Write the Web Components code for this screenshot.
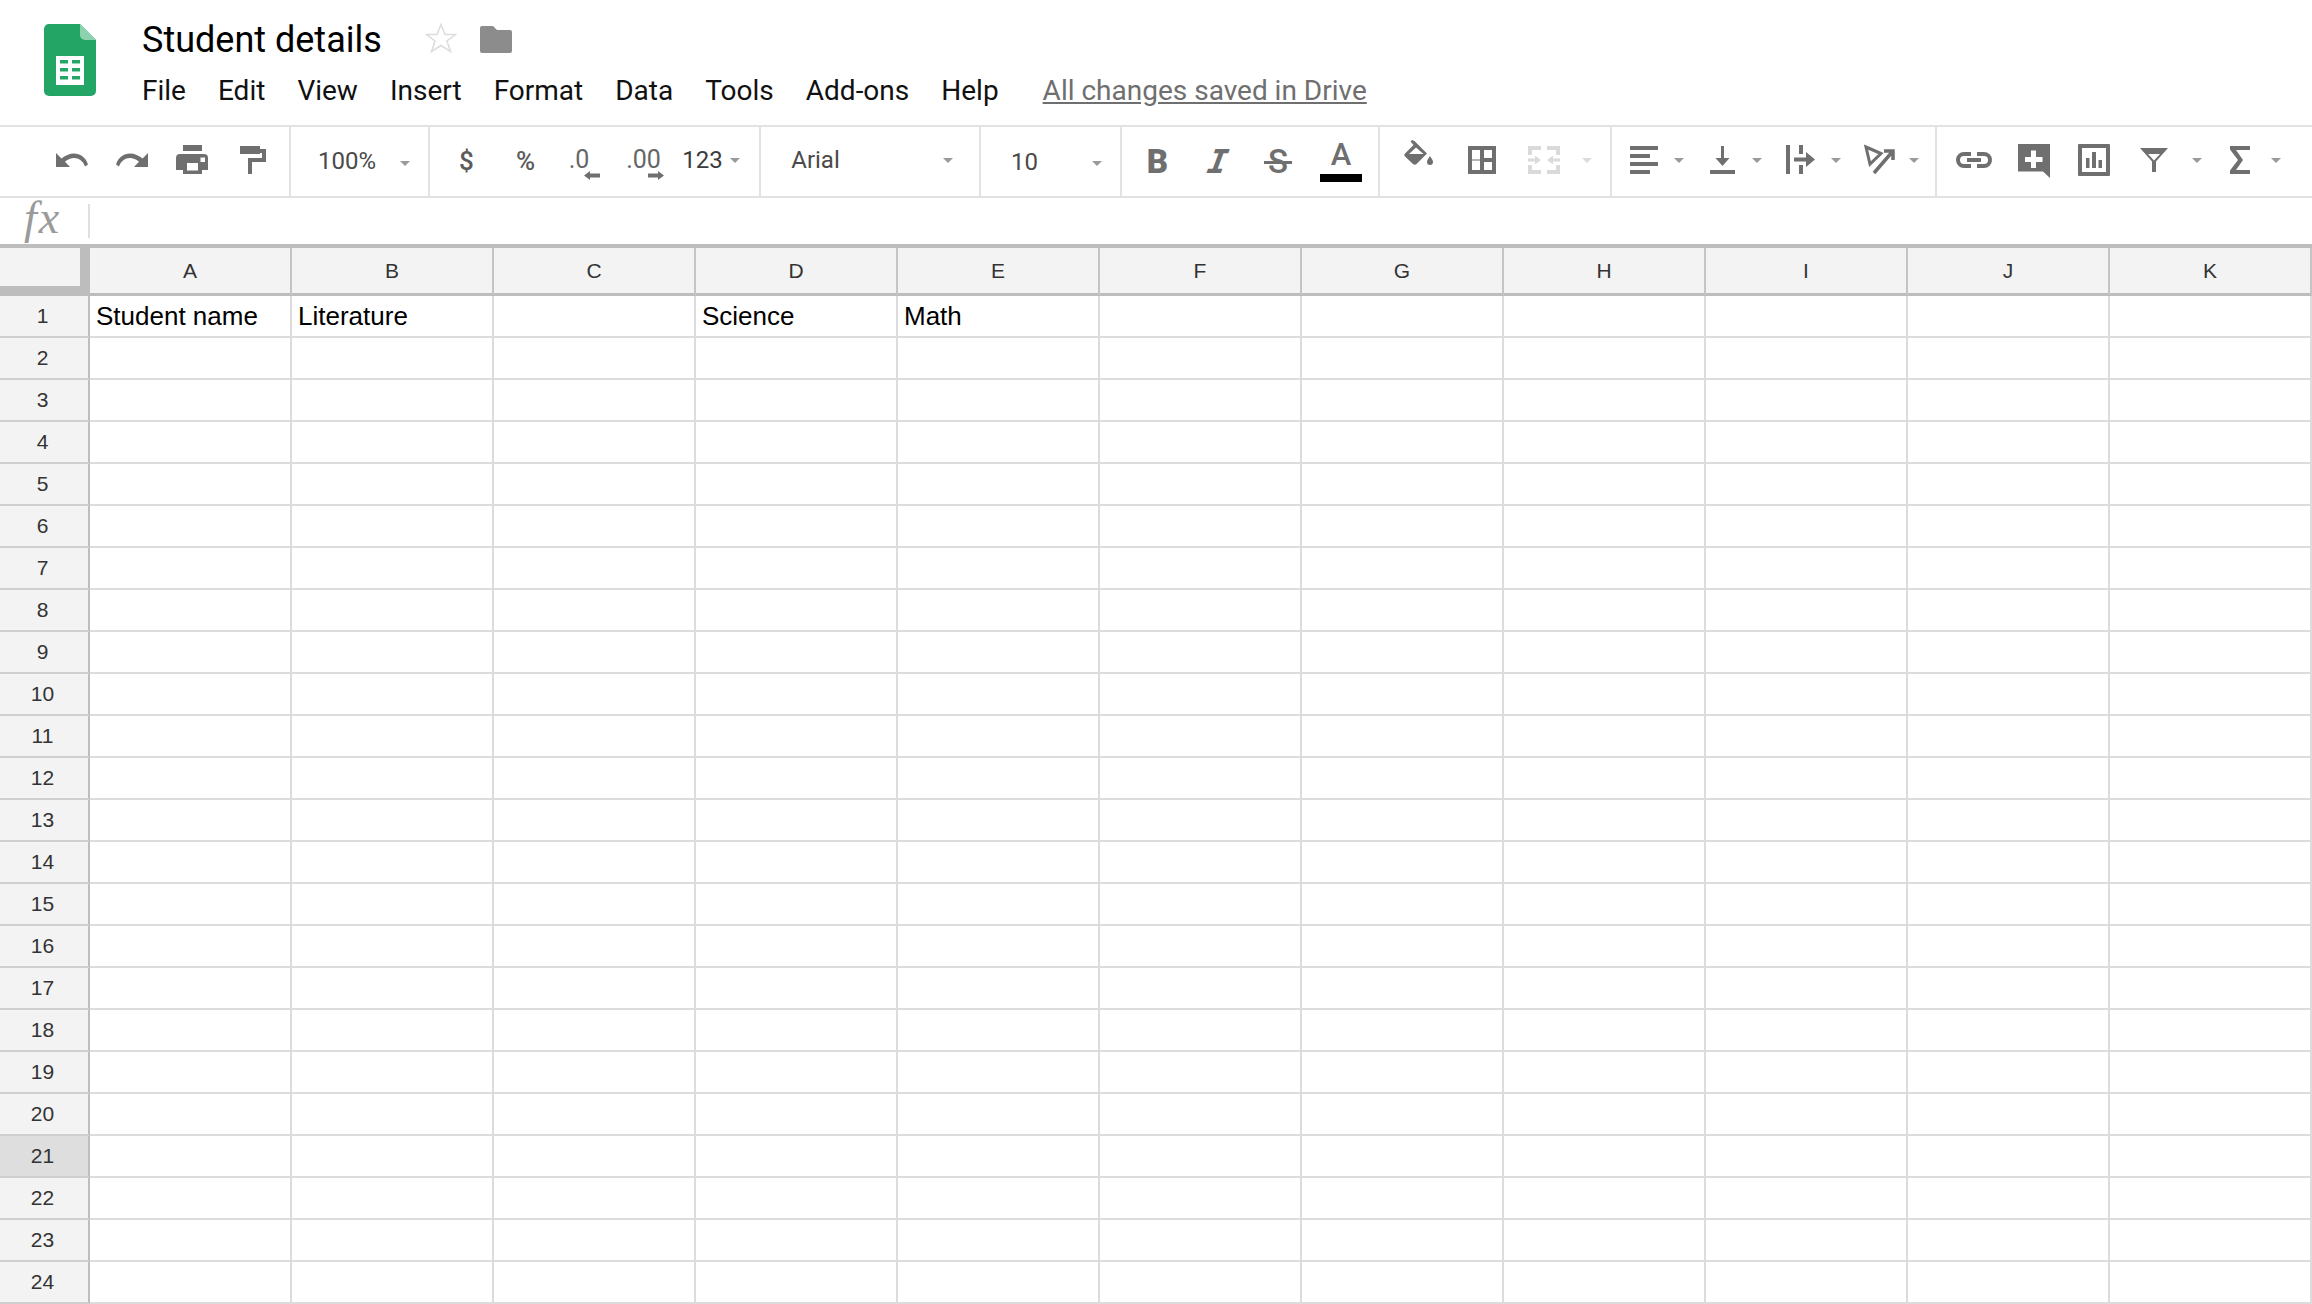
<!DOCTYPE html>
<html lang="en">
<head>
<meta charset="utf-8">
<title>Student details</title>
<style>
html,body{margin:0;padding:0;background:#fff;height:1304px;overflow:hidden;font-family:Roboto,"Liberation Sans",sans-serif}
svg{display:block;flex:none;overflow:visible}
.g{fill:#6f6f6f}
.s{fill:none;stroke:#6f6f6f;stroke-width:4}
</style>
</head>
<body>
<gs-app>
  <gs-header doc-title="Student details">
    <gs-menu-item slot="menu">File</gs-menu-item>
    <gs-menu-item slot="menu">Edit</gs-menu-item>
    <gs-menu-item slot="menu">View</gs-menu-item>
    <gs-menu-item slot="menu">Insert</gs-menu-item>
    <gs-menu-item slot="menu">Format</gs-menu-item>
    <gs-menu-item slot="menu">Data</gs-menu-item>
    <gs-menu-item slot="menu">Tools</gs-menu-item>
    <gs-menu-item slot="menu">Add-ons</gs-menu-item>
    <gs-menu-item slot="menu">Help</gs-menu-item>
  </gs-header>

  <gs-toolbar>
    <tb-group w="291">
      <tb-btn ml="56" w="32" t="25"><svg width="32" height="16" viewBox="0 0 32 16"><path class="g" d="M0 1V15H14L9 9.7C12 7.3 15 6 18 6C23 6 27 9 29 14.5L32 12.5C29.5 5 24 1.5 18 1.5C13.5 1.5 9 3.5 5.5 6.5Z"/></svg></tb-btn>
      <tb-btn ml="28" w="32" t="25"><svg width="32" height="16" viewBox="0 0 32 16"><path class="g" transform="matrix(-1 0 0 1 32 0)" d="M0 1V15H14L9 9.7C12 7.3 15 6 18 6C23 6 27 9 29 14.5L32 12.5C29.5 5 24 1.5 18 1.5C13.5 1.5 9 3.5 5.5 6.5Z"/></svg></tb-btn>
      <tb-btn ml="28" w="32" t="18"><svg width="32" height="29" viewBox="0 0 32 29"><path class="g" d="M7 0H26V6H7ZM4 9H28A4 4 0 0 1 32 13V25H26V29H7V25H0V13A4 4 0 0 1 4 9Z"/><path fill="#fff" d="M11 18H22V25.500H11ZM24.500 12.500H29V17H24.500Z"/></svg></tb-btn>
      <tb-btn ml="32" w="26" t="18"><svg width="26" height="29" viewBox="0 0 26 29"><path class="g" d="M0 1H20V9H0ZM20 4H26V17H12V29H8V13H22V8H20Z"/></svg></tb-btn>
    </tb-group>
    <tb-group w="139">
      <tb-btn ml="27" w="58" t="19"><span class="t" style="font-size:24px;color:#4a4a4a">100%</span></tb-btn>
      <tb-btn ml="24" w="10" t="34" arrow></tb-btn>
    </tb-group>
    <tb-group w="331">
      <tb-btn ml="30" w="13" t="19"><span class="t" style="font-size:26px;font-weight:500;color:#5c5c5c">$</span></tb-btn>
      <tb-btn ml="43" w="19" t="19"><span class="t" style="font-size:26px;font-weight:500;color:#5c5c5c">%</span></tb-btn>
      <tb-btn ml="34" w="20" t="18"><span class="t" style="font-size:25px;color:#666">.0</span><svg style="position:absolute;left:15px;top:44px" width="16" height="9" viewBox="0 0 16 9"><path class="g" d="M0 4.500L6 0V2.500H16V6.500H6V9Z"/></svg></tb-btn>
      <tb-btn ml="39" w="31" t="18"><span class="t" style="font-size:25px;color:#666">.00</span><svg style="position:absolute;left:20px;top:44px" width="16" height="9" viewBox="0 0 16 9"><path class="g" d="M16 4.500L10 0V2.500H0V6.500H10V9Z"/></svg></tb-btn>
      <tb-btn ml="24" w="39" t="18"><span class="t" style="font-size:24px;color:#3c3c3c">123</span></tb-btn>
      <tb-btn ml="8" w="10" t="31" arrow></tb-btn>
    </tb-group>
    <tb-group w="220">
      <tb-btn ml="30" w="49" t="18"><span class="t" style="font-size:24px;color:#4a4a4a">Arial</span></tb-btn>
      <tb-btn ml="103" w="10" t="31" arrow></tb-btn>
    </tb-group>
    <tb-group w="141">
      <tb-btn ml="30" w="27" t="20"><span class="t" style="font-size:24px;color:#4a4a4a">10</span></tb-btn>
      <tb-btn ml="54" w="10" t="34" arrow></tb-btn>
    </tb-group>
    <tb-group w="258">
      <tb-btn ml="26" w="19" t="16"><span class="t" style="font:900 33px/38px Roboto,sans-serif;color:#6f6f6f">B</span></tb-btn>
      <tb-btn ml="39" w="24" t="16"><span class="t" style="font:italic 700 33px/38px 'DejaVu Sans Mono',monospace;color:#6f6f6f;transform:skewX(-10deg)">I</span></tb-btn>
      <tb-btn ml="34" w="28" t="16"><tb-strike>S</tb-strike></tb-btn>
      <tb-btn ml="28" w="42" t="10" style="flex-direction:column"><span class="t" style="font:500 31px/36px Roboto,sans-serif;color:#6f6f6f">A</span><svg style="margin-top:1px" width="42" height="8" viewBox="0 0 42 8"><rect width="42" height="8" fill="#000"/></svg></tb-btn>
    </tb-group>
    <tb-group w="232">
      <tb-btn ml="24" w="29" t="13"><svg width="29" height="26" viewBox="0 0 29 26"><path class="g" d="M8 0L10.500 1L23 13.500L12.500 24A3 3 0 0 1 9 24L1 16.500A2 2 0 0 1 1 13.500L9.500 5L6.500 1.500ZM12 7.500L5 14H19.500Z"/><path class="g" d="M26 16C27.500 18.500 29 20 29 22A3 3 0 0 1 23 22C23 20 24.500 18.500 26 16Z"/></svg></tb-btn>
      <tb-btn ml="35" w="28" t="19"><svg width="28" height="28" viewBox="0 0 28 28"><path class="g" fill-rule="evenodd" d="M0 0H28V28H0ZM4 4V24H12V4ZM16 4V12H24V4ZM16 16V24H24V16Z"/><rect x="4" y="13" width="8" height="2" fill="#b4b4b4"/></svg></tb-btn>
      <tb-btn ml="32" w="32" t="19"><svg width="32" height="28" viewBox="0 0 32 28"><path fill="#dadada" d="M0 0H13V4H4V9H0ZM19 0H32V9H28V4H19ZM0 19H4V24H13V28H0ZM28 19H32V28H19V24H28ZM0 12.500H7V9.500L13 14L7 18.500V15.500H0ZM32 12.500H25V9.500L19 14L25 18.500V15.500H32Z"/></svg></tb-btn>
      <tb-btn ml="22" w="10" t="31" arrow light></tb-btn>
    </tb-group>
    <tb-group w="325">
      <tb-btn ml="18" w="28" t="19"><svg width="28" height="28" viewBox="0 0 28 28"><path class="g" d="M0 0H28V4H0ZM0 8H20V12H0ZM0 16H28V20H0ZM0 24H20V28H0Z"/></svg></tb-btn>
      <tb-btn ml="16" w="10" t="31" arrow></tb-btn>
      <tb-btn ml="26" w="25" t="19"><svg width="25" height="28" viewBox="0 0 25 28"><path class="g" d="M0 24H25V28H0ZM11 0H14V12H19.500L12.500 20L5.500 12H11Z"/></svg></tb-btn>
      <tb-btn ml="17" w="10" t="31" arrow></tb-btn>
      <tb-btn ml="24" w="29" t="18"><svg width="29" height="29" viewBox="0 0 29 29"><path class="g" d="M0 0H4V29H0ZM13 0H17V9H13ZM13 20H17V29H13ZM8 12.500H20V7L29 14.500L20 22V16.500H8Z"/></svg></tb-btn>
      <tb-btn ml="16" w="10" t="31" arrow></tb-btn>
      <tb-btn ml="23" w="31" t="18"><svg width="31" height="29" viewBox="0 0 31 29"><path class="s" style="stroke-width:3" d="M2 2L17 8.500L6 19Z"/><path class="s" style="stroke-width:3.500" d="M10 28L29 6M20 6H29V15"/></svg></tb-btn>
      <tb-btn ml="14" w="10" t="31" arrow></tb-btn>
    </tb-group>
    <tb-group w="375" last>
      <tb-btn ml="19" w="36" t="25"><svg width="36" height="16" viewBox="0 0 36 16"><path class="s" d="M15 2H8A6 6 0 0 0 8 14H15M21 2H28A6 6 0 0 1 28 14H21M11 8H25"/></svg></tb-btn>
      <tb-btn ml="26" w="32" t="17"><svg width="32" height="34" viewBox="0 0 32 34"><path class="g" d="M0 0H32V34L25 27.500H0Z"/><path fill="#fff" d="M13 6.500H18V13H24.500V18H18V24H13V18H7V13H13Z"/></svg></tb-btn>
      <tb-btn ml="28" w="32" t="17"><svg width="32" height="32" viewBox="0 0 32 32"><path class="g" fill-rule="evenodd" d="M1 0H31A1 1 0 0 1 32 1V31A1 1 0 0 1 31 32H1A1 1 0 0 1 0 31V1A1 1 0 0 1 1 0ZM4 4V28H28V4ZM8 14H11.500V24H8ZM14 8H18V24H14ZM20.500 16H24V24H20.500Z"/></svg></tb-btn>
      <tb-btn ml="30" w="28" t="21"><svg width="28" height="24" viewBox="0 0 28 24"><path class="g" fill-rule="evenodd" d="M0 0H28L16 13.500V24H12V13.500ZM8 6L14 12.500L20 6Z"/></svg></tb-btn>
      <tb-btn ml="24" w="10" t="31" arrow></tb-btn>
      <tb-btn ml="28" w="20" t="19"><svg width="20" height="28" viewBox="0 0 20 28"><path class="g" d="M0 0H20V4H6L13 14L6 24H20V28H0V24.500L8 14L0 3.500Z"/></svg></tb-btn>
      <tb-btn ml="21" w="10" t="31" arrow></tb-btn>
    </tb-group>
  </gs-toolbar>

  <gs-formula></gs-formula>
  <gs-sheet cols="A B C D E F G H I J K" rows="24" selected-row="21"></gs-sheet>
</gs-app>

<script>
class GsApp extends HTMLElement{
  constructor(){super();this.attachShadow({mode:'open'}).innerHTML=`<style>:host{display:flex;flex-direction:column;width:2312px;height:1304px;overflow:hidden}</style><slot></slot>`}
}
class GsHeader extends HTMLElement{
  connectedCallback(){
    if(this.shadowRoot)return;
    const title=this.getAttribute('doc-title')||'';
    this.attachShadow({mode:'open'}).innerHTML=`<style>
      :host{display:flex;flex:none;height:125px;box-sizing:border-box;padding:24px 0 0 44px;color:#000;font-family:Roboto,"Liberation Sans",sans-serif}
      svg{display:block;flex:none}
      .body{margin-left:46px;display:flex;flex-direction:column}
      .top{display:flex;align-items:flex-start;margin-top:-1px;height:40px}
      h1{margin:0;font:400 36px/34px Roboto,"Liberation Sans",sans-serif;white-space:nowrap;width:240px}
      .star{margin:0 0 0 43px}
      .folder{margin:3px 0 0 23px}
      nav{display:flex;align-items:center;margin-top:12px;height:32px}
      .saved{margin-left:44px;font-size:28px;line-height:32px;color:#6f6f6f;text-decoration:underline;white-space:nowrap}
    </style>
    <svg width="52" height="72" viewBox="0 0 52 72"><path fill="#23a566" d="M5 0H36L52 16V67A5 5 0 0 1 47 72H5A5 5 0 0 1 0 67V5A5 5 0 0 1 5 0Z"/><path fill="#8ed1ae" d="M36 0L52 16H41A5 5 0 0 1 36 11Z"/><path fill="#fff" d="M12 32H40V61H12Z"/><path fill="#23a566" d="M16 36H24V39.500H16ZM28 36H36V39.500H28ZM16 44H24V47.500H16ZM28 44H36V47.500H28ZM16 52H24V55.500H16ZM28 52H36V55.500H28Z"/></svg>
    <div class="body">
      <div class="top"><h1>${title}</h1>
        <svg class="star" width="32" height="30" viewBox="0 0 32 30"><path fill="none" stroke="#dcdcdc" stroke-width="1.500" d="M16 1.500L20 11.500H30.500L22 18L25.500 28.500L16 22.500L6.500 28.500L10 18L1.500 11.500H12Z"/></svg>
        <svg class="folder" width="32" height="27" viewBox="0 0 32 27"><path fill="#8c8c8c" d="M2 0H13L17 4H30A2 2 0 0 1 32 6V25A2 2 0 0 1 30 27H2A2 2 0 0 1 0 25V2A2 2 0 0 1 2 0Z"/></svg>
      </div>
      <nav><slot name="menu"></slot><span class="saved">All changes saved in Drive</span></nav>
    </div>`;
  }
}
class GsMenuItem extends HTMLElement{
  constructor(){super();this.attachShadow({mode:'open'}).innerHTML=`<style>:host{display:block;font:400 28px/32px Roboto,"Liberation Sans",sans-serif;color:#111;margin-right:32px;white-space:nowrap}:host(:last-of-type){margin-right:0}</style><slot></slot>`}
}
class GsToolbar extends HTMLElement{
  constructor(){super();this.attachShadow({mode:'open'}).innerHTML=`<style>:host{display:flex;flex:none;height:73px;box-sizing:border-box;border-top:2px solid #e2e2e2;border-bottom:2px solid #e2e2e2;font-family:Roboto,"Liberation Sans",sans-serif}</style><slot></slot>`}
}
class TbGroup extends HTMLElement{
  connectedCallback(){
    if(this.shadowRoot)return;
    const last=this.hasAttribute('last');
    this.attachShadow({mode:'open'}).innerHTML=`<style>:host{display:flex;flex:none;box-sizing:border-box;width:${this.getAttribute('w')}px;height:69px;${last?'':'border-right:2px solid #e2e2e2;'}align-items:flex-start}</style><slot></slot>`;
  }
}
class TbBtn extends HTMLElement{
  connectedCallback(){
    if(this.shadowRoot)return;
    const g=n=>this.getAttribute(n)||0;
    const color=this.hasAttribute('light')?'#dcdcdc':'#9a9a9a';
    const arrow=this.hasAttribute('arrow')?`<svg style="display:block" width="10" height="5" viewBox="0 0 10 5"><path d="M0 0H10L5 5Z" fill="${color}"/></svg>`:'';
    this.attachShadow({mode:'open'}).innerHTML=`<style>:host{display:flex;flex:none;position:relative;box-sizing:border-box;width:${g('w')}px;margin-left:${g('ml')}px;padding-top:${g('t')}px;align-items:center;justify-content:center}
      ::slotted(.t){display:block;line-height:30px;white-space:nowrap}</style><slot></slot>${arrow}`;
  }
}
class TbStrike extends HTMLElement{
  constructor(){super();this.attachShadow({mode:'open'}).innerHTML=`<style>:host{display:block;position:relative;width:28px;text-align:center;font:500 33px/38px Roboto,sans-serif;color:#6f6f6f}
    i{position:absolute;left:0;right:0;top:18px;height:3px;background:#6f6f6f}</style><slot></slot><i></i>`}
}
class GsFormula extends HTMLElement{
  constructor(){super();this.attachShadow({mode:'open'}).innerHTML=`<style>:host{display:flex;flex:none;height:46px;box-sizing:border-box;padding:3px 0 0 24px;align-items:flex-start}
    span{font:italic 400 46px/34px "Liberation Serif",serif;letter-spacing:2px;color:#9a9a9a;width:64px;white-space:nowrap}
    i{display:block;width:2px;height:34px;margin-top:3px;background:#e0e0e0}</style><span>fx</span><i></i>`}
}
class GsSheet extends HTMLElement{
  connectedCallback(){
    if(this.shadowRoot)return;
    const cols=this.getAttribute('cols').split(' ');
    const rows=+this.getAttribute('rows');
    const sel=+this.getAttribute('selected-row');
    const data={1:{A:'Student name',B:'Literature',D:'Science',E:'Math'}};
    let h='<div class="corner"></div>';
    for(const c of cols)h+=`<div class="ch">${c}</div>`;
    for(let r=1;r<=rows;r++){
      h+=`<div class="rh${r===sel?' sel':''}">${r}</div>`;
      for(const c of cols){const v=(data[r]&&data[r][c])||'';h+=`<div class="c">${v}</div>`}
    }
    this.attachShadow({mode:'open'}).innerHTML=`<style>
      :host{display:block;flex:none;border-top:4px solid #bdbdbd;font-family:"Liberation Sans",Arial,sans-serif}
      .grid{display:grid;grid-template-columns:90px repeat(11,202px);grid-template-rows:48px repeat(${rows},42px)}
      .grid>div{box-sizing:border-box;white-space:nowrap;overflow:hidden}
      .corner{background:#f3f3f3;border-right:10px solid #bdbdbd;border-bottom:10px solid #bdbdbd}
      .ch{background:#f3f3f3;border-right:2px solid #c4c4c4;border-bottom:3px solid #bdbdbd;display:flex;align-items:center;justify-content:center;font-size:21px;color:#333}
      .rh{background:#f3f3f3;border-right:2px solid #bdbdbd;border-bottom:2px solid #cfcfcf;padding-right:3px;display:flex;align-items:center;justify-content:center;font-size:21px;color:#333}
      .rh.sel{background:#dedede}
      .c{border-right:2px solid #dcdcdc;border-bottom:2px solid #dcdcdc;padding:0 0 0 6px;font-size:26px;line-height:41px;color:#000}
    </style><div class="grid">${h}</div>`;
  }
}
customElements.define('gs-app',GsApp);
customElements.define('gs-header',GsHeader);
customElements.define('gs-menu-item',GsMenuItem);
customElements.define('tb-group',TbGroup);
customElements.define('gs-toolbar',GsToolbar);
customElements.define('tb-btn',TbBtn);
customElements.define('tb-strike',TbStrike);
customElements.define('gs-formula',GsFormula);
customElements.define('gs-sheet',GsSheet);
</script>
</body>
</html>
